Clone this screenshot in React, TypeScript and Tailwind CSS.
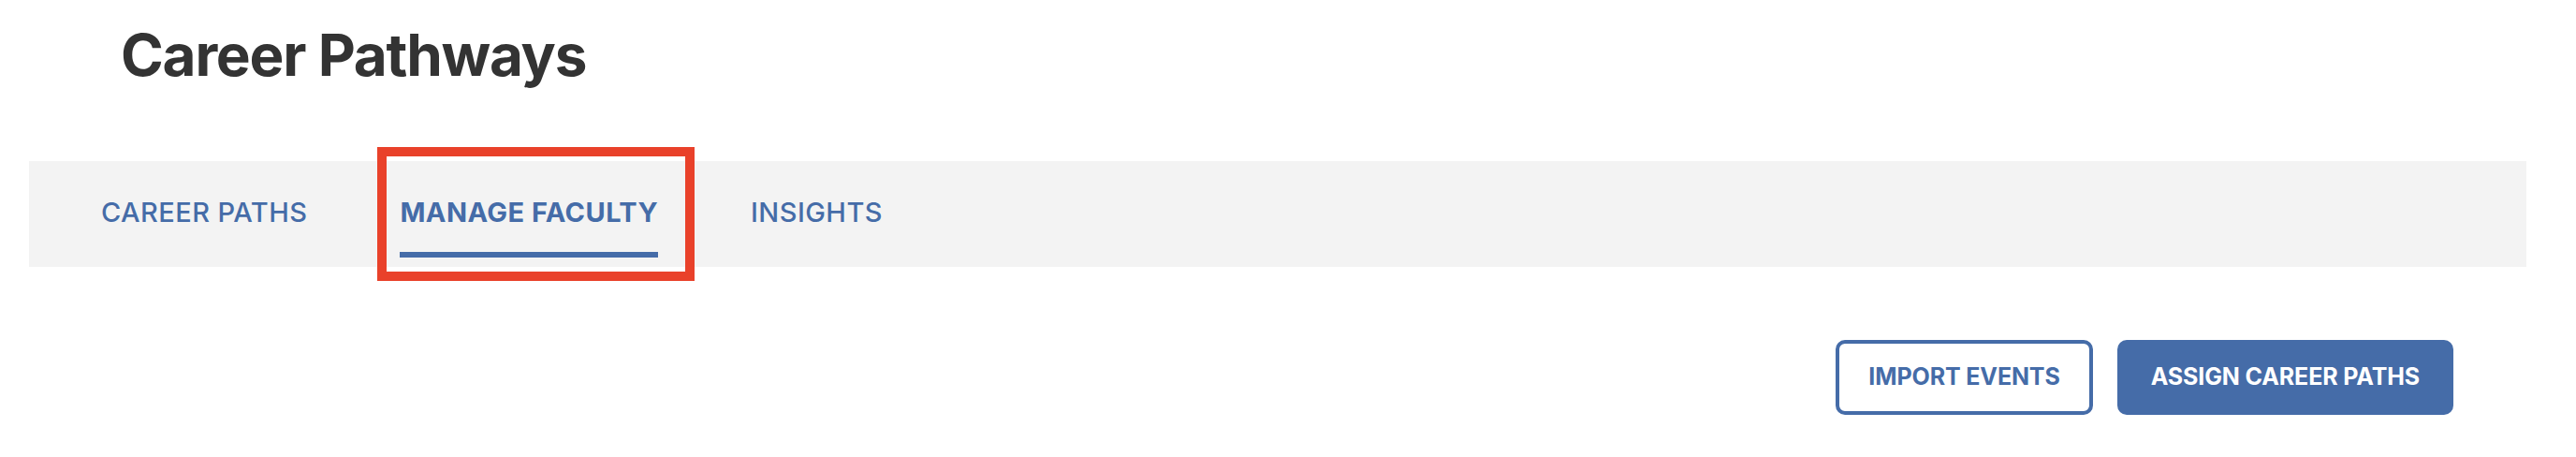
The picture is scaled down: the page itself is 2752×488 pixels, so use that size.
import React from 'react';

const tabs = ['Career Paths', 'Manage Faculty', 'Insights'];

export default function App() {
  return (
    <div className="min-h-[488px] w-full bg-white font-['Inter',sans-serif]">
      <h1 className="pl-[129px] pt-[21px] text-[62px] font-bold leading-[76px] tracking-[-0.02em] text-[#333333]">
        Career Pathways
      </h1>

      {/* Tab bar */}
      <nav className="mt-[75px] ml-[31px] mr-[53px] flex h-[113px] items-start gap-[99px] bg-[#f3f3f3] pl-[77px]">
        {tabs.map((t, i) => {
          const active = i === 1;
          return (
            <div
              key={t}
              className={`relative pt-[37px] pb-[24px] border-b-[6px] ${
                active ? 'border-[#456ca8] font-bold' : 'border-transparent font-medium'
              }`}
            >
              <span className="block text-[29px] leading-[36px] uppercase tracking-[0.015em] text-[#456ca8]">
                {t}
              </span>
              {active && (
                <div className="pointer-events-none absolute -left-[24px] -right-[39px] -top-[15px] -bottom-[31px] border-[10px] border-[#e9412a]" />
              )}
            </div>
          );
        })}
      </nav>

      {/* Actions */}
      <div className="mt-[78px] flex justify-end gap-[26px] pr-[131px]">
        <button className="flex h-[80px] items-center rounded-[10px] border-4 border-[#456ca8] bg-white px-[31px]">
          <span className="text-[25px] font-bold uppercase tracking-[-0.005em] text-[#456ca8]">Import Events</span>
        </button>
        <button className="flex h-[80px] items-center rounded-[10px] bg-[#456ca8] px-[36px]">
          <span className="text-[25px] font-bold uppercase tracking-[-0.005em] text-white">Assign Career Paths</span>
        </button>
      </div>
    </div>
  );
}
